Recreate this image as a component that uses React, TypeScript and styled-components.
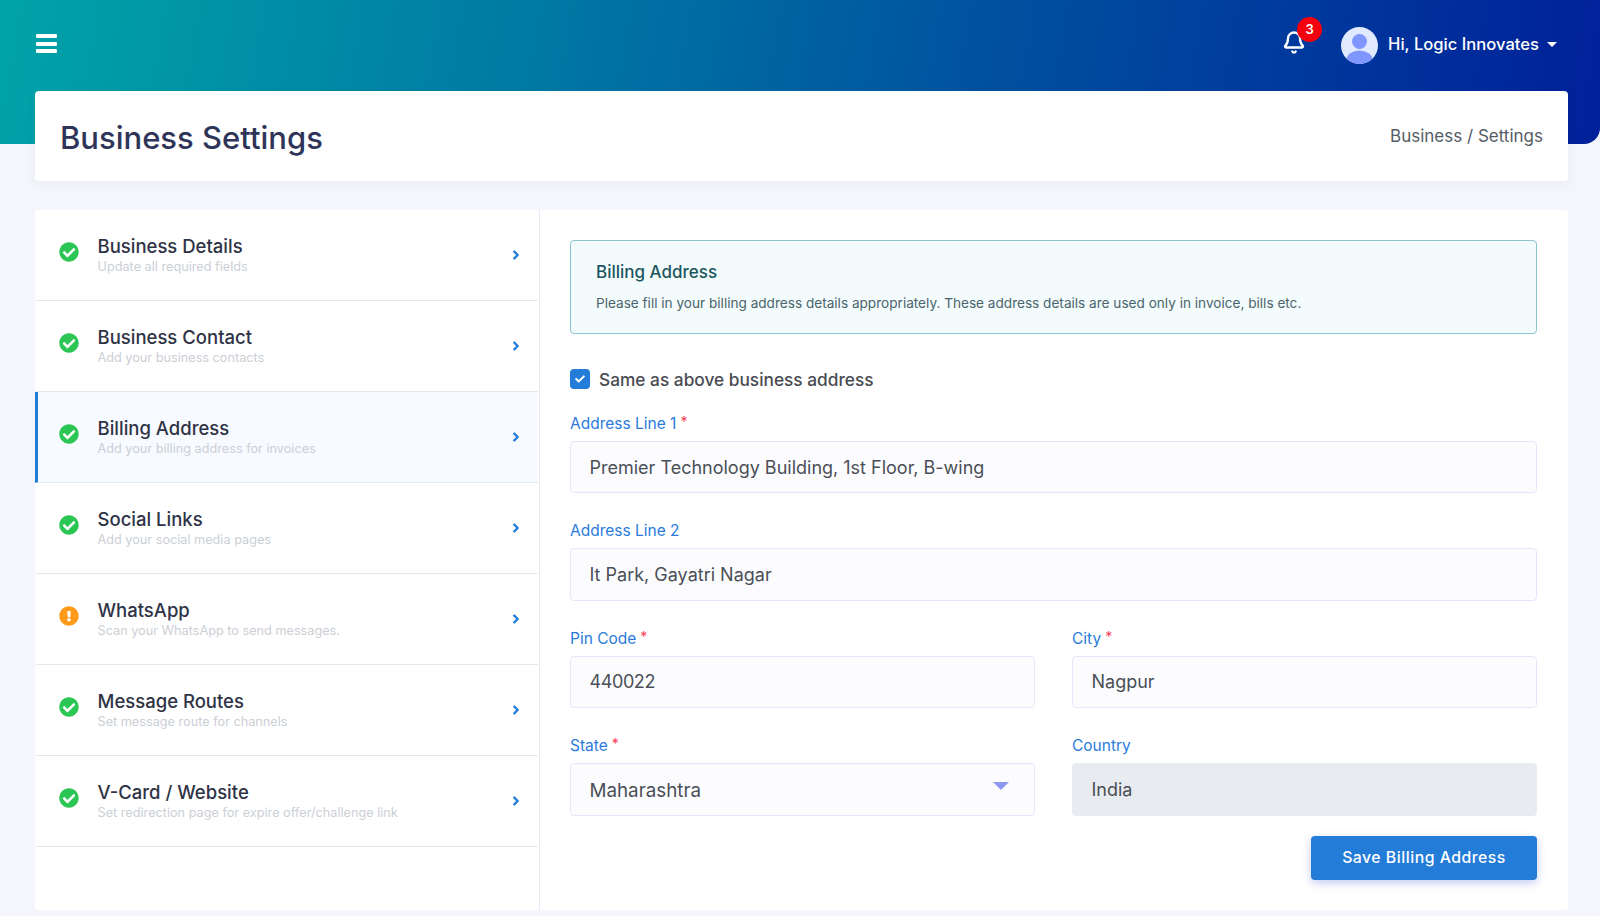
import React, { FC } from 'react';
import styled, { createGlobalStyle } from 'styled-components';
import { Bell } from 'lucide-react';
import { FaCheck, FaCheckCircle, FaChevronRight, FaExclamationCircle } from 'react-icons/fa';

const GlobalStyle = createGlobalStyle`
  html, body {
    margin: 0;
    padding: 0;
    background: #f4f6fb;
    font-family: 'Inter', 'Liberation Sans', sans-serif;
  }
  * {
    box-sizing: border-box;
  }
`;

const Page = styled.div`
  width: 1600px;
  height: 916px;
  overflow: hidden;
  background: #f4f6fb;
`;

const Header = styled.header`
  height: 144px;
  padding: 27px 43px 0 36px;
  display: flex;
  align-items: flex-start;
  justify-content: space-between;
  background: linear-gradient(100deg, #00a4a8 0%, #0078a4 34%, #00509f 62%, #00209a 100%);
  border-bottom-right-radius: 16px;
`;

const MenuButton = styled.button`
  width: 21px;
  height: 19px;
  margin-top: 7px;
  padding: 0;
  border: 0;
  background: none;
  display: flex;
  flex-direction: column;
  justify-content: space-between;
  span {
    height: 4px;
    border-radius: 1px;
    background: #fff;
  }
`;

const TopRight = styled.div`
  display: flex;
  align-items: center;
  height: 37px;
`;

const BellWrap = styled.div`
  position: relative;
  width: 24px;
  height: 24px;
  margin: -7px 35px 0 0;
  color: #fff;
  display: flex;
  align-items: center;
  justify-content: center;
`;

const Badge = styled.span`
  position: absolute;
  top: -13px;
  left: 15px;
  width: 25px;
  height: 25px;
  border-radius: 50%;
  background: #f5000f;
  color: #fff;
  font-size: 13px;
  font-weight: 600;
  line-height: 25px;
  text-align: center;
`;

const UserName = styled.span`
  margin: -4px 0 0 10px;
  color: #fff;
  font-size: 16.6px;
  font-weight: 500;
  white-space: nowrap;
`;

const Caret = styled.span`
  margin: -3px 0 0 8px;
  width: 0;
  height: 0;
  border-left: 5px solid transparent;
  border-right: 5px solid transparent;
  border-top: 5px solid #fff;
`;

const Content = styled.main`
  margin: -53px 32px 0 35px;
  display: flex;
  flex-direction: column;
  gap: 29px;
`;

const TitleCard = styled.section`
  height: 90px;
  padding: 0 25px;
  display: flex;
  align-items: center;
  justify-content: space-between;
  background: #fff;
  border-radius: 4px;
  box-shadow: 0 4px 12px rgba(40, 50, 90, 0.05);
`;

const Title = styled.h1`
  margin: 2px 0 0;
  color: #2e3559;
  font-size: 31px;
  font-weight: 500;
`;

const Breadcrumb = styled.div`
  margin-top: -1px;
  color: #555c66;
  font-size: 17px;
  font-weight: 400;
`;

const MainCard = styled.section`
  height: 700px;
  display: flex;
  background: #fff;
  border-radius: 4px;
`;

const StepList = styled.nav`
  width: 505px;
  flex: none;
  padding: 0 1px;
  border-right: 1px solid #e7eaf0;
`;

const StepRow = styled.div<{ $active?: boolean }>`
  height: 91px;
  display: flex;
  align-items: center;
  border-bottom: 1px solid #e4e8ef;
  background: ${p => (p.$active ? '#f7fbff' : '#fff')};
  margin-left: ${p => (p.$active ? '-1px' : '0')};
  border-left: ${p => (p.$active ? '3px solid #247cd9' : '0')};
  padding: 0 17px 0 ${p => (p.$active ? '21px' : '23px')};
`;

const StepIcon = styled.span<{ $warn?: boolean }>`
  width: 20px;
  height: 20px;
  flex: none;
  margin-top: -7px;
  background: radial-gradient(circle, #fff 55%, transparent 56%);
  color: ${p => (p.$warn ? '#ff9a1a' : '#2cc655')};
  font-size: 20px;
  line-height: 0;
`;

const StepText = styled.div`
  flex: 1;
  margin-left: 18.5px;
`;

const StepTitle = styled.div`
  color: #2f3346;
  font-size: 18.5px;
  font-weight: 500;
  line-height: 24px;
`;

const StepSub = styled.div`
  color: #cbcfd6;
  font-size: 12.7px;
  line-height: 18px;
`;

const StepArrow = styled.span`
  color: #247cd9;
  font-size: 10px;
  line-height: 0;
  svg {
    stroke: currentColor;
    stroke-width: 50;
  }
`;

const FormPanel = styled.div`
  flex: 1;
  padding: 30px 31px 0 30px;
`;

const Alert = styled.div`
  height: 94px;
  padding: 20px 25px 0;
  background: #f3fbfc;
  border: 1px solid #8cc4cf;
  border-radius: 4px;
`;

const AlertTitle = styled.div`
  color: #1c5560;
  font-size: 17px;
  font-weight: 500;
  line-height: 22px;
`;

const AlertText = styled.p`
  margin: 10px 0 0;
  color: #4a646b;
  font-size: 13.6px;
  line-height: 20px;
`;

const CheckRow = styled.label`
  height: 20px;
  margin: 35px 0 23px;
  display: flex;
  align-items: center;
  gap: 9px;
  color: #484c52;
  font-size: 17.3px;
  font-weight: 500;
`;

const CheckBox = styled.span`
  width: 20px;
  height: 20px;
  border-radius: 4px;
  background: #247cd9;
  color: #fff;
  font-size: 10px;
  display: flex;
  align-items: center;
  justify-content: center;
`;

const FormGrid = styled.div`
  display: grid;
  grid-template-columns: repeat(2, 1fr);
  column-gap: 37px;
  row-gap: 26px;
`;

const Field = styled.div<{ $wide?: boolean }>`
  grid-column: ${p => (p.$wide ? '1 / -1' : 'auto')};
  position: relative;
`;

const FieldLabel = styled.label`
  display: block;
  height: 24px;
  margin-bottom: 5px;
  color: #2a7bdc;
  font-size: 15.5px;
  line-height: 24px;
`;

const Required = styled.span`
  margin-left: 4px;
  color: #ff3d57;
  font-size: 14px;
  line-height: 0;
  vertical-align: 2px;
`;

const Input = styled.input`
  display: block;
  width: 100%;
  height: 52.4px;
  padding: 0 18.5px;
  background: #fcfcff;
  border: 1px solid #e4e6fa;
  border-radius: 4px;
  outline: none;
  color: #4a4f57;
  font-family: inherit;
  font-size: 18px;
  &:disabled {
    background: #e8ebef;
    border-color: #e8ebef;
  }
`;

const PinInput = styled(Input)`
  letter-spacing: -0.4px;
`;

const SelectBox = styled.select`
  display: block;
  width: 100%;
  height: 52.4px;
  padding: 2px 18.5px 0;
  appearance: none;
  background: #fcfcff;
  border: 1px solid #e4e6fa;
  border-radius: 4px;
  outline: none;
  color: #4a4f57;
  font-family: inherit;
  font-size: 18.8px;
`;

const SelectCaret = styled.span`
  position: absolute;
  right: 26px;
  top: 48px;
  width: 0;
  height: 0;
  border-left: 8px solid transparent;
  border-right: 8px solid transparent;
  border-top: 8px solid #8f98f0;
`;

const Actions = styled.div`
  margin-top: 20px;
  display: flex;
  justify-content: flex-end;
`;

const SaveButton = styled.button`
  width: 226px;
  height: 44px;
  border: 0;
  border-radius: 4px;
  background: #247cd9;
  box-shadow: 0 3px 8px rgba(60, 80, 220, 0.3);
  color: #fff;
  font-family: inherit;
  font-size: 15.8px;
  font-weight: 500;
  letter-spacing: 0.5px;
`;

const steps = [
  { title: 'Business Details', sub: 'Update all required fields' },
  { title: 'Business Contact', sub: 'Add your business contacts' },
  { title: 'Billing Address', sub: 'Add your billing address for invoices', active: true },
  { title: 'Social Links', sub: 'Add your social media pages' },
  { title: 'WhatsApp', sub: 'Scan your WhatsApp to send messages.', warn: true },
  { title: 'Message Routes', sub: 'Set message route for channels' },
  { title: 'V-Card / Website', sub: 'Set redirection page for expire offer/challenge link' },
];

const Avatar: FC = () => (
  <svg width="37" height="37" viewBox="0 0 37 37">
    <defs>
      <clipPath id="avatarClip">
        <circle cx="18.5" cy="18.5" r="18.5" />
      </clipPath>
    </defs>
    <circle cx="18.5" cy="18.5" r="18.5" fill="#e1e9ff" />
    <g clipPath="url(#avatarClip)" fill="#8096ff">
      <circle cx="18.5" cy="14.5" r="7.5" />
      <ellipse cx="18.5" cy="33" rx="13" ry="9.5" />
    </g>
  </svg>
);

const App: FC = () => {
  return (
    <Page>
      <GlobalStyle />
      <Header>
        <MenuButton aria-label="menu">
          <span />
          <span />
          <span />
        </MenuButton>
        <TopRight>
          <BellWrap>
            <Bell size={25} strokeWidth={2.3} />
            <Badge>3</Badge>
          </BellWrap>
          <Avatar />
          <UserName>Hi, Logic Innovates</UserName>
          <Caret />
        </TopRight>
      </Header>
      <Content>
        <TitleCard>
          <Title>Business Settings</Title>
          <Breadcrumb>Business / Settings</Breadcrumb>
        </TitleCard>
        <MainCard>
          <StepList>
            {steps.map(step => (
              <StepRow key={step.title} $active={step.active}>
                <StepIcon $warn={step.warn}>
                  {step.warn ? <FaExclamationCircle /> : <FaCheckCircle />}
                </StepIcon>
                <StepText>
                  <StepTitle>{step.title}</StepTitle>
                  <StepSub>{step.sub}</StepSub>
                </StepText>
                <StepArrow>
                  <FaChevronRight />
                </StepArrow>
              </StepRow>
            ))}
          </StepList>
          <FormPanel>
            <Alert>
              <AlertTitle>Billing Address</AlertTitle>
              <AlertText>
                Please fill in your billing address details appropriately. These address details are used only in
                invoice, bills etc.
              </AlertText>
            </Alert>
            <CheckRow>
              <CheckBox>
                <FaCheck />
              </CheckBox>
              Same as above business address
            </CheckRow>
            <FormGrid>
              <Field $wide>
                <FieldLabel>
                  Address Line 1<Required>*</Required>
                </FieldLabel>
                <Input readOnly defaultValue="Premier Technology Building, 1st Floor, B-wing" />
              </Field>
              <Field $wide>
                <FieldLabel>Address Line 2</FieldLabel>
                <Input readOnly defaultValue="It Park, Gayatri Nagar" />
              </Field>
              <Field>
                <FieldLabel>
                  Pin Code<Required>*</Required>
                </FieldLabel>
                <PinInput readOnly defaultValue="440022" />
              </Field>
              <Field>
                <FieldLabel>
                  City<Required>*</Required>
                </FieldLabel>
                <Input readOnly defaultValue="Nagpur" />
              </Field>
              <Field>
                <FieldLabel>
                  State<Required>*</Required>
                </FieldLabel>
                <SelectBox defaultValue="Maharashtra">
                  <option>Maharashtra</option>
                </SelectBox>
                <SelectCaret />
              </Field>
              <Field>
                <FieldLabel>Country</FieldLabel>
                <Input disabled readOnly defaultValue="India" />
              </Field>
            </FormGrid>
            <Actions>
              <SaveButton>Save Billing Address</SaveButton>
            </Actions>
          </FormPanel>
        </MainCard>
      </Content>
    </Page>
  );
};

export default App;
